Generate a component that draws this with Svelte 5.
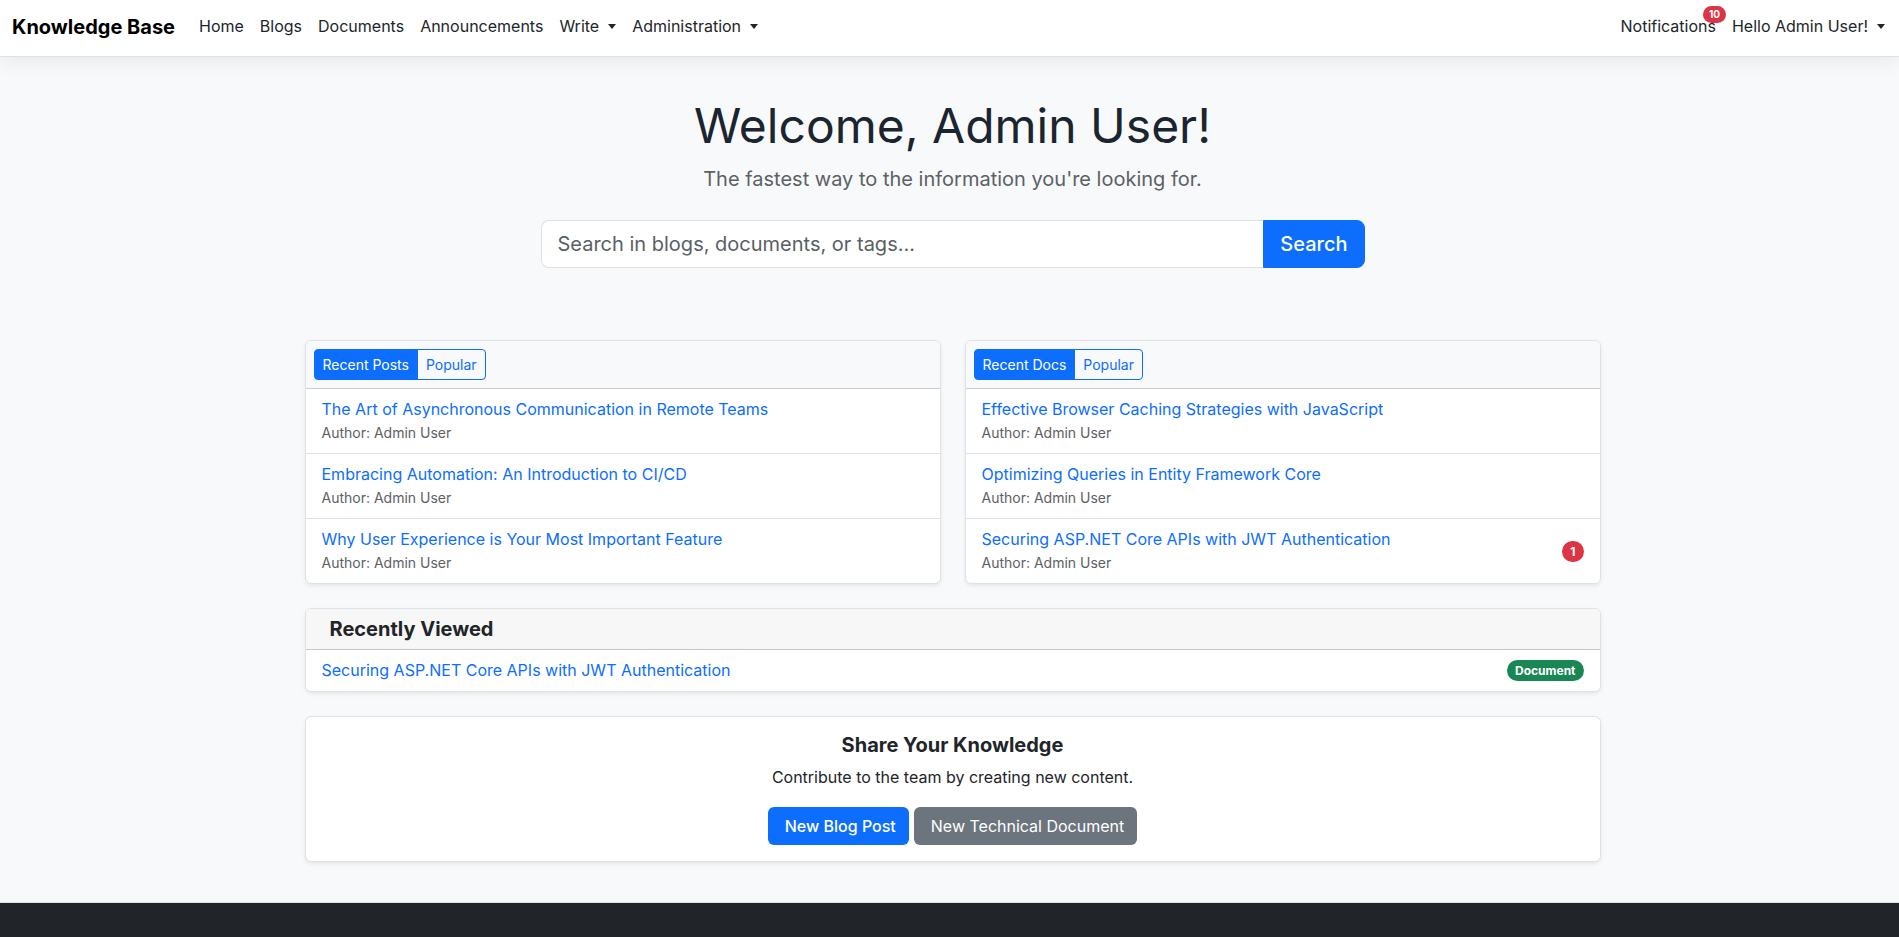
<script>
  const links = [
    { label: 'Home' },
    { label: 'Blogs' },
    { label: 'Documents' },
    { label: 'Announcements' },
    { label: 'Write', menu: true },
    { label: 'Administration', menu: true }
  ];

  const panels = [
    {
      tabs: ['Recent Posts', 'Popular'],
      items: [
        { title: 'The Art of Asynchronous Communication in Remote Teams', author: 'Admin User' },
        { title: 'Embracing Automation: An Introduction to CI/CD', author: 'Admin User' },
        { title: 'Why User Experience is Your Most Important Feature', author: 'Admin User' }
      ]
    },
    {
      tabs: ['Recent Docs', 'Popular'],
      items: [
        { title: 'Effective Browser Caching Strategies with JavaScript', author: 'Admin User' },
        { title: 'Optimizing Queries in Entity Framework Core', author: 'Admin User' },
        { title: 'Securing ASP.NET Core APIs with JWT Authentication', author: 'Admin User', count: 1 }
      ]
    }
  ];

  let active = $state([0, 0]);
  let query = $state('');
</script>

<div class="page">
  <header class="navbar">
    <a class="brand" href="#home">Knowledge Base</a>
    <nav class="links" aria-label="Main">
      {#each links as link}
        {#if link.menu}
          <button class="nav-link" type="button">{link.label}<span class="caret"></span></button>
        {:else}
          <a class="nav-link" href="#{link.label.toLowerCase()}">{link.label}</a>
        {/if}
      {/each}
    </nav>
    <div class="links account">
      <a class="nav-link notifications" href="#notifications">Notifications<span class="badge count">10</span></a>
      <button class="nav-link" type="button">Hello Admin User!<span class="caret"></span></button>
    </div>
  </header>

  <main>
    <section class="hero">
      <h1>Welcome, Admin User!</h1>
      <p class="lead">The fastest way to the information you're looking for.</p>
      <form class="search" role="search" onsubmit={(e) => e.preventDefault()}>
        <input type="text" aria-label="Search in blogs, documents, or tags" placeholder="Search in blogs, documents, or tags..." bind:value={query} />
        <button type="submit">Search</button>
      </form>
    </section>

    <div class="columns">
      {#each panels as panel, p}
        <section class="card">
          <div class="card-tabs">
            {#each panel.tabs as tab, t}
              <button type="button" class="tab" class:active={active[p] === t} aria-pressed={active[p] === t} onclick={() => (active[p] = t)}>{tab}</button>
            {/each}
          </div>
          <ul>
            {#each panel.items as item}
              <li>
                <div>
                  <a class="title" href="#article">{item.title}</a>
                  <small>Author: {item.author}</small>
                </div>
                {#if item.count}<span class="badge danger">{item.count}</span>{/if}
              </li>
            {/each}
          </ul>
        </section>
      {/each}
    </div>

    <section class="card">
      <h2 class="card-heading">Recently Viewed</h2>
      <ul>
        <li>
          <a class="title" href="#article">Securing ASP.NET Core APIs with JWT Authentication</a>
          <span class="badge success">Document</span>
        </li>
      </ul>
    </section>

    <section class="card share">
      <h2>Share Your Knowledge</h2>
      <p>Contribute to the team by creating new content.</p>
      <div class="actions">
        <a class="btn primary" href="#new-post">New Blog Post</a>
        <a class="btn secondary" href="#new-document">New Technical Document</a>
      </div>
    </section>
  </main>

  <footer></footer>
</div>

<style>
  :global(body) {
    background: #f8f9fb;
  }

  .page,
  .page * {
    box-sizing: border-box;
  }

  .page {
    display: flex;
    flex-direction: column;
    min-height: 100vh;
    font: 400 16px/24px Inter, sans-serif;
    color: #212529;
  }

  a {
    color: #0d6efd;
    text-decoration: none;
  }

  button,
  input {
    font: inherit;
  }

  button {
    cursor: pointer;
  }

  h1,
  h2,
  p,
  ul {
    margin: 0;
    padding: 0;
  }

  .navbar {
    display: flex;
    align-items: center;
    padding: 6px 6px 10px 12px;
    background: #fff;
    border-bottom: 1px solid #dee2e6;
    box-shadow: 0 8px 16px rgba(0, 0, 0, 0.05);
  }

  .brand {
    margin-right: 16px;
    padding-top: 2px;
    font-size: 20px;
    line-height: 30px;
    font-weight: 700;
    color: #000;
  }

  .links {
    display: flex;
    align-items: center;
  }

  .account {
    margin-left: auto;
  }

  .nav-link {
    position: relative;
    display: block;
    padding: 8px;
    border: 0;
    background: none;
    color: #212529;
    white-space: nowrap;
  }

  .caret {
    display: inline-block;
    margin-left: 9px;
    vertical-align: 3px;
    border-top: 5px solid;
    border-right: 4px solid transparent;
    border-left: 4px solid transparent;
  }

  .badge {
    flex: none;
    padding: 4px 8px;
    border-radius: 11px;
    font-size: 12px;
    line-height: 13px;
    font-weight: 700;
    color: #fff;
    text-align: center;
  }

  .danger {
    background: #dc3545;
  }

  .success {
    background: #198754;
  }

  .count {
    position: absolute;
    top: 0;
    right: -2px;
    padding: 3px 6px;
    font-size: 10px;
    line-height: 11px;
    background: #dc3545;
  }

  main {
    display: flex;
    flex-direction: column;
    gap: 24px;
    width: 100%;
    max-width: 1302px;
    margin: 0 auto;
    padding: 40px 0 40px 6px;
  }

  .hero {
    padding-bottom: 48px;
    text-align: center;
  }

  h1 {
    margin-bottom: 9px;
    font-size: 48px;
    line-height: 58px;
    font-weight: 400;
    color: #1b2530;
  }

  .lead {
    margin-bottom: 26px;
    font-size: 20px;
    line-height: 30px;
    color: #5c6166;
  }

  .search {
    display: flex;
    max-width: 824px;
    margin: 0 auto;
    font-size: 20px;
    line-height: 30px;
  }

  .search input {
    flex: 1;
    min-width: 0;
    padding: 8px 16px;
    border: 1px solid #dee2e6;
    border-right: 0;
    border-radius: 8px 0 0 8px;
    background: #fff;
    color: #212529;
  }

  .search input::placeholder {
    color: #595f65;
    opacity: 1;
  }

  .search button {
    padding: 8px 16px;
    border: 1px solid #0d6efd;
    border-radius: 0 8px 8px 0;
    background: #0d6efd;
    color: #fff;
    font-weight: 500;
  }

  .columns {
    display: grid;
    grid-template-columns: 1fr 1fr;
    gap: 24px;
  }

  .card {
    overflow: hidden;
    border: 1px solid #dee2e6;
    border-radius: 6px;
    background: #fff;
    box-shadow: 0 2px 4px rgba(0, 0, 0, 0.075);
  }

  .card-tabs {
    display: flex;
    padding: 8px;
    border-bottom: 1px solid #c9ccd0;
    background: #f8f9fa;
  }

  .tab {
    padding: 4px 8px;
    border: 1px solid #0d6efd;
    background: transparent;
    font-size: 14px;
    line-height: 21px;
    color: #0d6efd;
  }

  .tab:first-child {
    border-radius: 4px 0 0 4px;
  }

  .tab:last-child {
    margin-left: -1px;
    border-radius: 0 4px 4px 0;
  }

  .tab.active {
    background: #0d6efd;
    color: #fff;
  }

  ul {
    list-style: none;
  }

  li {
    display: flex;
    align-items: center;
    justify-content: space-between;
    min-height: 41px;
    padding: 8px 16px;
  }

  li + li {
    border-top: 1px solid #dee2e6;
  }

  .title,
  small {
    display: block;
  }

  .title {
    align-self: flex-start;
  }

  small {
    font-size: 14px;
    color: #5c6166;
  }

  .card-heading {
    padding: 8px 24px;
    border-bottom: 1px solid #c8c8c9;
    background: #f7f7f7;
  }

  h2 {
    font-size: 20px;
    line-height: 24px;
    font-weight: 700;
  }

  .share {
    padding: 16px;
    text-align: center;
  }

  .share p {
    margin: 8px 0 18px;
  }

  .actions {
    display: flex;
    justify-content: center;
    gap: 5px;
  }

  .btn {
    padding: 7px 13px 7px 17px;
    border-radius: 6px;
    color: #fff;
  }

  .primary {
    background: #0d6efd;
    font-weight: 500;
  }

  .secondary {
    background: #6c757d;
  }

  footer {
    flex: 1;
    border-top: 1px solid #dee2e6;
    background: #212529;
  }
</style>
